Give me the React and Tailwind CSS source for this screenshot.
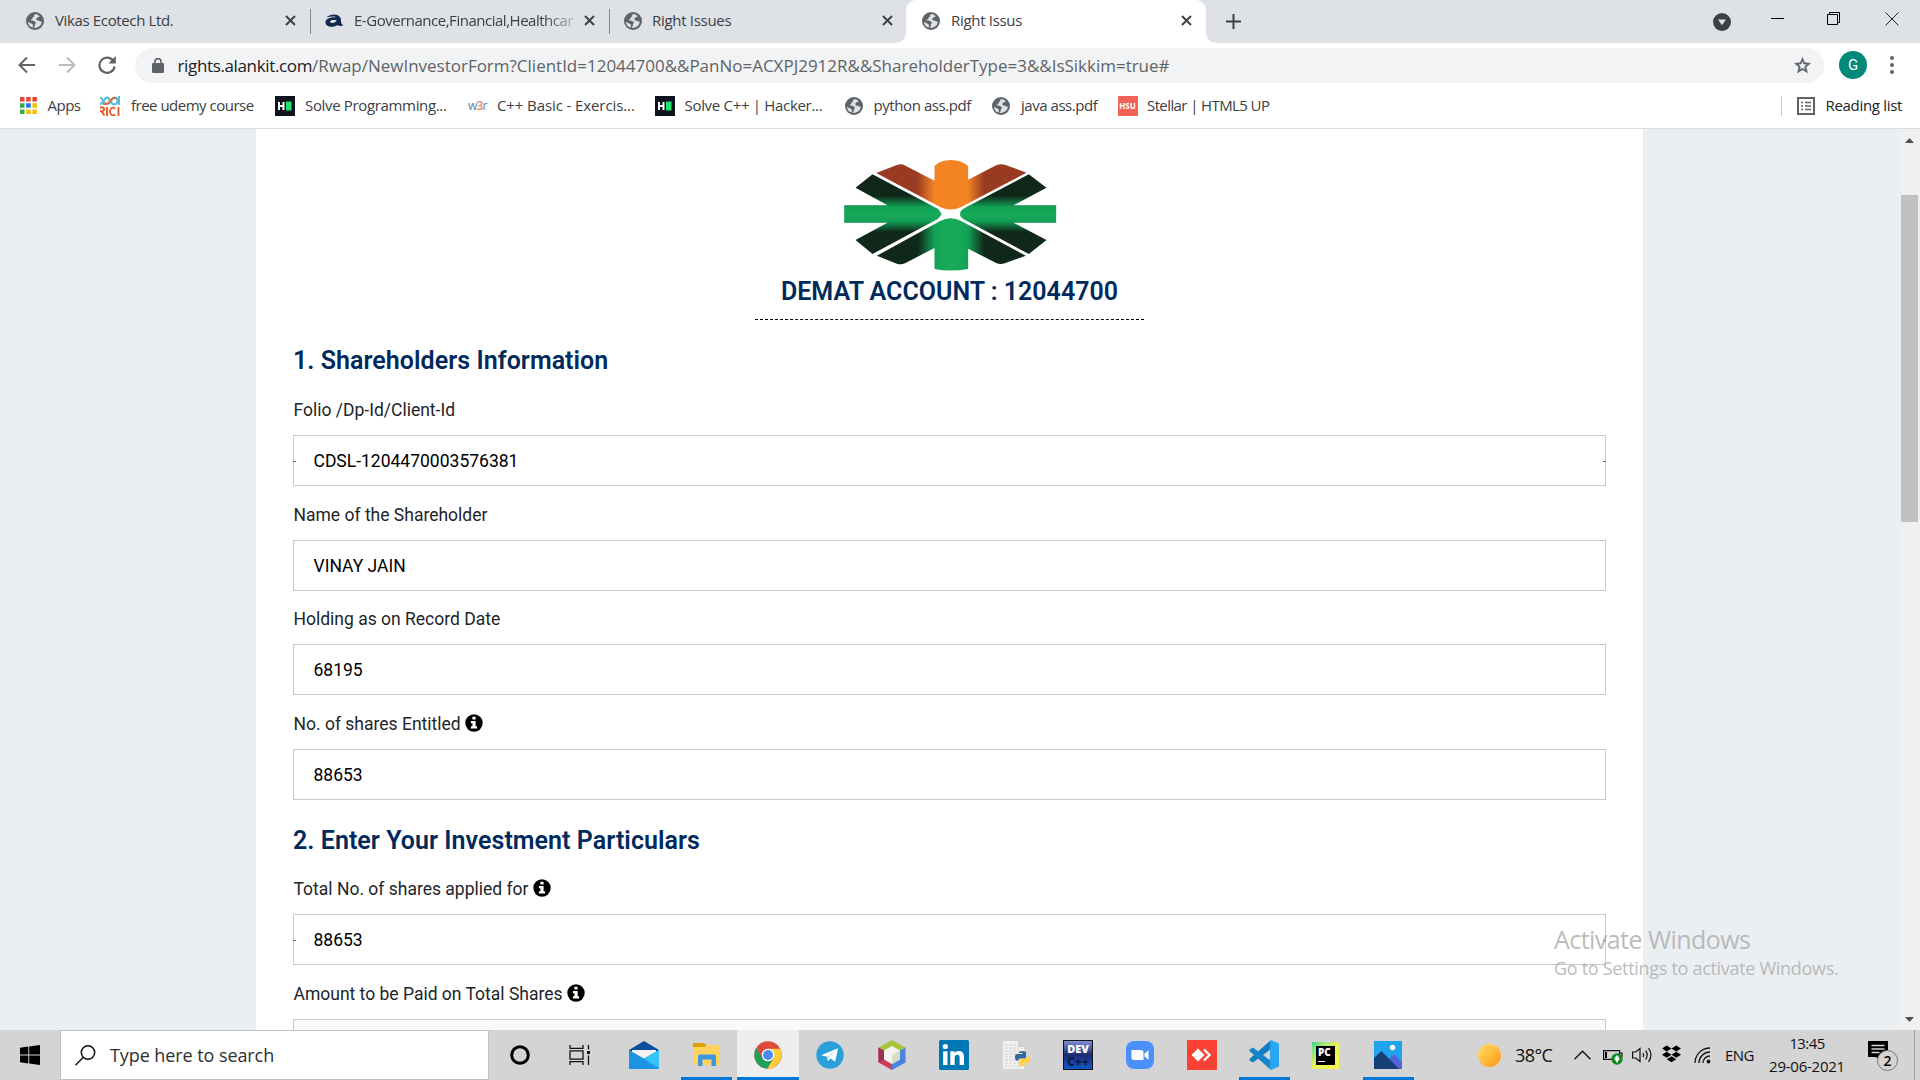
import React from "react";

function Globe() {
  return (
    <svg className="h-[18px] w-[18px] shrink-0" viewBox="0 0 18 18">
      <circle cx="9" cy="9" r="9" fill="#5f6368" />
      <path
        d="M9.6 2.1c-.9.5-1.8 1.100-1.700 2.100.1.900-.8.800-1.300 1.400-.5.600.1 1.300-.6 1.700-.7.400-1.400.2-1.300 1 .1.700 1.500.5 2.900.6 1.700.2 2.200.900 2.200 1.900 0 .900-.9 1.200-1 2.200 0 .800-.5 1.300-.6 2.900a7 7 0 0 1-6.300-6.200L5.200 11.500C5.800 12 6.800 11.800 6.800 12.700v2.900A7 7 0 0 0 15.900 9.800c-.8-.2-1.700.1-2.300-.7-.5-.7-1.900-.1-2.700-.8-.8-.8-.5-2.200.3-2.700.7-.5 1.900-.2 2.500-1.300A7 7 0 0 0 9.600 2.100Z"
        fill="#dee1e6"
      />
    </svg>
  );
}

function Close() {
  return (
    <svg className="h-[11px] w-[11px] shrink-0" viewBox="0 0 11 11" stroke="#3c4043" strokeWidth="1.9">
      <path d="M1 1l9 9M10 1l-9 9" />
    </svg>
  );
}

function AlankitIcon() {
  return (
    <svg className="h-[18px] w-[19px] shrink-0" viewBox="0 0 19 18">
      <path d="M1.500 5.500C5 1.800 12 1.500 15 5c1.400 1.800.8 4.800 1.300 6.300.4 1 1.200 1.500 2.500 1.600-2.300 1.500-5 1.300-6.100 0C9 15.800.8 15.500.5 10.500.5 6 7.500 4.800 11.800 5.600 9.800 4 5 4.500 1.500 5.500Z" fill="#12284c" />
      <path d="M11.700 8.600C9 7.700 5.200 8 5 9.800c.2 2 5.800 1.700 6.700-1.200Z" fill="#dee1e6" />
    </svg>
  );
}

function TabStrip() {
  return (
    <div className="flex h-[43px] bg-[#dee1e6] text-[15px] text-[#3c4043]">
      <div className="flex w-[310px] items-center border-r border-transparent pl-[26px] pb-[2px]">
        <Globe />
        <span className="ml-[11px] w-[229.500px] whitespace-nowrap tracking-[-0.36px]">Vikas Ecotech Ltd.</span>
        <Close />
      </div>
      <div className="mt-[9px] h-[25px] w-px bg-[#85888d]" />
      <div className="flex w-[298px] items-center pl-[14px] pb-[2px]">
        <AlankitIcon />
        <span className="ml-[10px] w-[220px] whitespace-nowrap tracking-[-0.48px] [mask-image:linear-gradient(to_right,black_86%,rgba(0,0,0,0.25))]">E-Governance,Financial,Healthcar</span>
        <span className="ml-[9.500px]"><Close /></span>
      </div>
      <div className="mt-[9px] h-[25px] w-px bg-[#85888d]" />
      <div className="flex w-[296px] items-center pl-[14px] pb-[2px]">
        <Globe />
        <span className="ml-[10px] w-[230px] whitespace-nowrap tracking-[-0.3px]">Right Issues</span>
        <Close />
      </div>
      <div className="relative flex w-[300px] items-center rounded-t-[10px] bg-white pl-[16px] pb-[2px]">
        <svg className="absolute bottom-0 -left-[10px] h-[10px] w-[10px]" viewBox="0 0 10 10"><path d="M10 0v10H0A10 10 0 0 0 10 0Z" fill="#fff" /></svg>
        <svg className="absolute bottom-0 -right-[10px] h-[10px] w-[10px]" viewBox="0 0 10 10"><path d="M0 0v10h10A10 10 0 0 1 0 0Z" fill="#fff" /></svg>
        <Globe />
        <span className="ml-[11px] w-[230px] whitespace-nowrap tracking-[-0.31px]">Right Issus</span>
        <Close />
      </div>
      <svg className="mt-[14px] ml-[20px] h-[15px] w-[15px]" viewBox="0 0 15 15" stroke="#3c4043" strokeWidth="2"><path d="M7.500 0v15M0 7.500h15" /></svg>
      <div className="flex-1" />
      <svg className="mt-[13px] h-[18px] w-[18px]" viewBox="0 0 18 18"><circle cx="9" cy="9" r="9" fill="#3c4043" /><path d="M5 6.500h8L9 12.200Z" fill="#dee1e6" /></svg>
      <svg className="mt-[12px] ml-[40px] h-[14px] w-[14px]" viewBox="0 0 14 14"><path d="M0 6.500h13" stroke="#000" /></svg>
      <svg className="mt-[12px] ml-[42px] h-[14px] w-[14px]" viewBox="0 0 14 14" fill="none" stroke="#000"><path d="M.5 2.500h10v10H.5zM2.500 2.500v-2h10v10h-2" /></svg>
      <svg className="mt-[12px] mr-[21px] ml-[44px] h-[14px] w-[14px]" viewBox="0 0 14 14" stroke="#222"><path d="M.5.5l13 13M13.500.5l-13 13" /></svg>
    </div>
  );
}

function Toolbar() {
  return (
    <div className="flex h-[44px] items-center bg-white">
      <svg className="ml-[18px] h-[18px] w-[18px]" viewBox="0 0 18 18" fill="none" stroke="#5f6368" strokeWidth="2"><path d="M17 9H2M9 1.500L1.500 9 9 16.500" /></svg>
      <svg className="ml-[22px] h-[18px] w-[18px]" viewBox="0 0 18 18" fill="none" stroke="#babcbe" strokeWidth="2"><path d="M1 9h15M9 1.500L16.500 9 9 16.500" /></svg>
      <svg className="ml-[22px] h-[18px] w-[18px]" viewBox="0 0 18 18" fill="none" stroke="#5f6368" strokeWidth="2.200"><path d="M15.600 5.300A7.600 7.600 0 1 0 16.600 10.500" /><path d="M17.800 0v7.500h-7.500Z" fill="#5f6368" stroke="none" /></svg>
      <div className="ml-[19px] flex h-[35px] w-[1689px] items-center rounded-full bg-[#f1f3f4] pl-[16.500px]">
        <svg className="h-[15px] w-[12px]" viewBox="0 0 12 15"><rect x="0" y="5" width="12" height="10" rx="1.200" fill="#5f6368" /><path d="M2.900 6V3.700a3.100 3.100 0 0 1 6.200 0V6" fill="none" stroke="#5f6368" strokeWidth="1.600" /></svg>
        <div className="mt-[2px] ml-[14px] flex text-[17px] whitespace-pre text-[#5f6368]">
          <span className="tracking-[-0.36px] text-[#202124]">rights.alankit.com</span>
          <span className="tracking-[-0.01px]">/Rwap/NewInvestorForm?ClientId=12044700&amp;&amp;PanNo=ACXPJ2912R&amp;&amp;ShareholderType=3&amp;&amp;IsSikkim=true#</span>
        </div>
        <svg className="mr-[12px] ml-auto h-[19px] w-[19px]" viewBox="0 0 24 24" fill="#5f6368"><path d="M22 9.240l-7.190-.62L12 2 9.190 8.630 2 9.240l5.460 4.730L5.820 21 12 17.270 18.180 21l-1.630-7.030L22 9.240zM12 15.400l-3.760 2.270 1-4.280-3.320-2.880 4.380-.38L12 6.100l1.710 4.040 4.380.38-3.320 2.880 1 4.280L12 15.400z" stroke="#5f6368" strokeWidth=".8" /></svg>
      </div>
      <div className="ml-[15px] flex h-[28px] w-[28px] items-center justify-center rounded-full bg-[#00897b] font-[Roboto] text-[15px] text-white">G</div>
      <div className="ml-[23px] flex flex-col gap-[3px]">
        <i className="h-[4px] w-[4px] rounded-full bg-[#5f6368]" />
        <i className="h-[4px] w-[4px] rounded-full bg-[#5f6368]" />
        <i className="h-[4px] w-[4px] rounded-full bg-[#5f6368]" />
      </div>
    </div>
  );
}

function HackerRank() {
  return (
    <svg className="h-[20px] w-[20px] shrink-0" viewBox="0 0 20 20"><path fill="#0e141e" d="M0 0h20v20H0z" /><path d="M4 6v8M8.500 6v8M4 10h4.500" stroke="#fff" strokeWidth="2" /><path fill="#1ee26b" d="M11 5.500h5.500v9H11z" /></svg>
  );
}

function BookmarksBar() {
  return (
    <div className="flex h-[42px] items-center border-b border-[#dadce0] bg-white pb-[4px] pl-[19.500px] text-[15px] whitespace-nowrap text-[#3c4043]">
      <div className="flex w-[80.5px] items-center">
        <svg className="mr-[11px] h-[17px] w-[17px]" viewBox="0 0 17 17">
          <path fill="#ea4335" d="M0 0h4.500v4.500H0zM6.200 0h4.500v4.500H6.200zM12.400 0h4.500v4.500h-4.500z" />
          <path fill="#34a853" d="M0 6.200h4.500v4.500H0zM0 12.400h4.500v4.500H0z" />
          <path fill="#1a73e8" d="M6.200 6.200h4.500v4.500H6.200z" />
          <path fill="#fbbc04" d="M12.400 6.200h4.500v4.500h-4.500zM6.200 12.400h4.500v4.500H6.200zM12.400 12.400h4.500v4.500h-4.500z" />
        </svg>
        <span className="tracking-[-0.5px]">Apps</span>
      </div>
      <div className="flex w-[174.5px] items-center">
        <svg className="mr-[11px] h-[20px] w-[20px] shrink-0" viewBox="0 0 20 20" fill="none" strokeWidth="1.900">
          <path d="M0 1.500C3 1.500 3 8 7 8 12 8 11 1.500 14.500 1.500 19 1.500 18 8.500 14 8.500 10.500 8.500 10.500 1.500 7 1.500 4 1.500 3.500 8 0 8" stroke="#54b8dc" />
          <path d="M3 7.500C5 9 8 8 10 5s4.500-4 6-2" stroke="#e86b3a" />
          <path d="M19 0v9" stroke="#54b8dc" />
          <path d="M0 11.500h2.200c2.500 0 2.500 3.600 0 3.600H0m1.500 0L4.500 19.500M7 11v9M15 12.500c-2-1.800-5-.5-5 3s3 4.800 5 3M18.500 11v9" stroke="#e8592b" />
        </svg>
        <span className="tracking-[-0.5px]">free udemy course</span>
      </div>
      <div className="flex w-[193.500px] items-center"><HackerRank /><span className="ml-[10.500px] tracking-[-0.34px]">Solve Programming...</span></div>
      <div className="flex w-[186.500px] items-center">
        <span className="w-[29px] text-[12px] tracking-[-0.8px] text-[#5b7fb8]">w<b className="font-semibold text-[#e98350]">3</b>r</span>
        <span className="tracking-[-0.1px]">C++ Basic - Exercis...</span>
      </div>
      <div className="flex w-[190px] items-center"><HackerRank /><span className="ml-[10px] tracking-[-0.31px]">Solve C++ | Hacker...</span></div>
      <div className="flex w-[147px] items-center"><Globe /><span className="ml-[11px] tracking-[-0.42px]">python ass.pdf</span></div>
      <div className="flex w-[126px] items-center"><Globe /><span className="ml-[11.500px] tracking-[-0.46px]">java ass.pdf</span></div>
      <div className="flex items-center">
        <span className="flex h-[20px] w-[20px] items-center justify-center bg-[#ef6358] text-[8px] font-bold text-white">HSU</span>
        <span className="ml-[9.500px] tracking-[-0.6px]">Stellar | HTML5 UP</span>
      </div>
      <div className="ml-auto h-[20px] w-px bg-[#c6c8cb]" />
      <svg className="ml-[15px] h-[18px] w-[18px]" viewBox="0 0 18 18" fill="none" stroke="#5f6368" strokeWidth="2"><path d="M1 1h16v16H1z" /><path d="M4 5.500h2M8 5.500h6M4 9h2M8 9h6M4 12.500h2M8 12.500h6" strokeWidth="1.600" /></svg>
      <span className="mr-[18px] ml-[11px] tracking-[-0.32px] text-[#202124]">Reading list</span>
    </div>
  );
}

function Logo() {
  return (
    <svg className="ml-[1px] h-[111px] w-[213px]" viewBox="312 60 638 333">
      <defs>
        <linearGradient id="arm" gradientUnits="userSpaceOnUse" x1="0" x2="0" y1="104" y2="340">
          <stop offset=".27" stopColor="#10281a" />
          <stop offset=".41" stopColor="#12a055" />
          <stop offset=".5" stopColor="#18aa5b" />
          <stop offset=".59" stopColor="#12a055" />
          <stop offset=".73" stopColor="#10281a" />
        </linearGradient>
        <linearGradient id="top" gradientUnits="userSpaceOnUse" x1="408" x2="858" y1="0" y2="0">
          <stop offset=".27" stopColor="#983b22" />
          <stop offset=".39" stopColor="#f38424" />
          <stop offset=".61" stopColor="#f38424" />
          <stop offset=".72" stopColor="#983b22" />
        </linearGradient>
        <linearGradient id="stem" gradientUnits="userSpaceOnUse" x1="408" x2="858" y1="0" y2="0">
          <stop offset=".28" stopColor="#10281a" />
          <stop offset=".39" stopColor="#14a356" />
          <stop offset=".5" stopColor="#18aa5b" />
          <stop offset=".61" stopColor="#14a356" />
          <stop offset=".72" stopColor="#10281a" />
        </linearGradient>
      </defs>
      <path fill="url(#top)" d="M408 99L470 75Q483 70 496 77L583 122V78Q600 60 632 60T684 78V119L768 76Q780 70 794 74L859 98 663 201Q632 216 600 201Z" />
      <path fill="url(#arm)" d="M312 196H442L346 143 397 103 594 207 605 222 594 236 397 342 346 300 442 248H312Z" />
      <path fill="url(#arm)" d="M948 196H820L919 143 866 103 668 207 660 216V228L668 236 866 342 919 300 820 248H948Z" />
      <path fill="url(#stem)" d="M410 347L600 243Q632 227 663 243L857 347 794 370Q780 375 768 369L684 326V387Q632 396 583 387V324L496 369Q483 375 470 371Z" />
    </svg>
  );
}

function InfoIcon() {
  return (
    <svg className="mb-[2px] h-[18px] w-[18px]" viewBox="0 0 18 18">
      <circle cx="9" cy="9" r="8.700" />
      <path d="M7.400 2.800h3.200v2.600H7.400zM5.900 7h4.700v5.300h1.500v2.200H5.900v-2.200h1.500V9.200H5.900z" fill="#fff" />
    </svg>
  );
}

function Label({ children, info }) {
  return (
    <div className="flex items-center gap-[4px] pl-[0.5px] text-[17.500px] leading-[20px] text-[#212529]">
      <span>{children}</span>
      {info && <InfoIcon />}
    </div>
  );
}

function Box({ children, ticks }) {
  return (
    <div className="relative flex h-[51px] items-center border border-[#c9c9c9] pt-[2px] pl-[19.500px] text-[17.500px] text-black">
      {children}
      {ticks && <i className="absolute top-[25px] -left-px h-px w-[3px] bg-[#5f6f86]" />}
      {ticks && <i className="absolute top-[25px] -right-px h-px w-[3px] bg-[#5f6f86]" />}
    </div>
  );
}

function Page() {
  return (
    <div className="relative flex h-[901px] overflow-hidden bg-[#ebeff2] font-[Roboto]">
      <div className="ml-[256px] h-[901px] w-[1387px] overflow-hidden bg-white px-[37px] pt-[31px]">
        <div className="flex flex-col items-center">
          <Logo />
          <h1 className="flex h-[40px] items-center pt-[2px] text-[25px] font-semibold whitespace-nowrap text-[#002a5c]">DEMAT ACCOUNT : 12044700</h1>
          <div className="mt-[8px] w-[389px] border-t border-dashed border-black" />
        </div>
        <h2 className="flex h-[80px] items-center pt-[2px] text-[25px] font-semibold tracking-[0.05px] text-[#002a5c]">1. Shareholders Information</h2>
        <div className="h-[35px]"><Label>Folio /Dp-Id/Client-Id</Label></div>
        <Box ticks>CDSL-1204470003576381</Box>
        <div className="h-[54px] pt-[19px]"><Label>Name of the Shareholder</Label></div>
        <Box>VINAY JAIN</Box>
        <div className="h-[53px] pt-[18px]"><Label>Holding as on Record Date</Label></div>
        <Box>68195</Box>
        <div className="h-[54px] pt-[19px]"><Label info>No. of shares Entitled</Label></div>
        <Box>88653</Box>
        <h2 className="flex h-[79px] items-center pt-[3px] text-[25px] font-semibold tracking-[0.05px] text-[#002a5c]">2. Enter Your Investment Particulars</h2>
        <div className="h-[35px]"><Label info>Total No. of shares applied for</Label></div>
        <Box ticks>88653</Box>
        <div className="h-[54px] pt-[19px]"><Label info>Amount to be Paid on Total Shares</Label></div>
        <div className="h-[51px] border border-[#c9c9c9] bg-[#fafafa]" />
      </div>
      <div className="ml-auto flex w-[21px] flex-col items-center bg-[#f0f0f0]">
        <svg className="mt-[9px] h-[5px] w-[9px]" viewBox="0 0 9 5"><path d="M4.500 0L9 5H0Z" fill="#505050" /></svg>
        <div className="mt-[52px] h-[327px] w-[17px] bg-[#c1c1c1]" />
        <svg className="mt-auto mb-[8px] h-[5px] w-[9px]" viewBox="0 0 9 5"><path d="M4.500 5L9 0H0Z" fill="#505050" /></svg>
      </div>
      <div className="absolute top-[793px] left-[1554px] font-['Open_Sans'] whitespace-nowrap text-[#aaaaaa]/80">
        <div className="text-[25px] leading-[34px] tracking-[-0.55px]">Activate Windows</div>
        <div className="text-[18px] leading-[25px] tracking-[-0.3px]">Go to Settings to activate Windows.</div>
      </div>
    </div>
  );
}

const apps = [
  { name: "mail", icon: (
    <svg className="h-[30px] w-[30px]" viewBox="0 0 30 30"><path d="M0 10L15 1l15 9v5H0z" fill="#0b4f9e" /><path d="M3 10h24v8L15 23 3 18z" fill="#f3f3f3" /><path d="M0 10l15 8.500L30 10v19H0z" fill="#1d9be6" /><path d="M30 10v18L15 18.500z" fill="#35c5f4" /><path d="M0 29L0 10l27 19z" fill="#1c94e0" /></svg>) },
  { name: "explorer", open: true, icon: (
    <svg className="h-[26px] w-[28px]" viewBox="0 0 28 26"><path d="M1 2q0-1 1-1h10l2 2v4H1z" fill="#e0a000" /><path d="M1 5h12l2-2h12q1 0 1 1v18q0 1-1 1H2q-1 0-1-1z" fill="#ffd35c" /><path d="M6 24V14q0-1.500 1.500-1.500h15Q24 12.500 24 14v10h-4.500v-6.500h-9V24z" fill="#3b97df" /></svg>) },
  { name: "chrome", open: true, active: true, icon: (
    <svg className="h-[28px] w-[28px]" viewBox="0 0 28 28"><circle cx="14" cy="14" r="13.700" fill="#dd4b3e" /><path d="M2.200 7.100A13.700 13.700 0 0 0 13.500 27.700L19.500 17.300 8.500 17.300z" fill="#1ea05d" /><path d="M26 7.700H14l5.600 9.600-6.300 10.400A13.700 13.700 0 0 0 26 7.700z" fill="#ffcd40" /><circle cx="14" cy="14" r="6.300" fill="#fff" /><circle cx="14" cy="14" r="5" fill="#4c8bf5" /></svg>) },
  { name: "telegram", icon: (
    <svg className="h-[28px] w-[28px]" viewBox="0 0 28 28"><circle cx="14" cy="14" r="13.700" fill="#2a9fd9" /><path d="M5 14.200L22 7.200 19.200 20.700 14.500 17.400 12 20 11 15.700z" fill="#fff" /><path d="M11 15.700L19.500 9.500 12.500 16.500 12 20z" fill="#c8daea" /></svg>) },
  { name: "netbeans", icon: (
    <svg className="h-[30px] w-[28px]" viewBox="0 0 28 30"><path d="M14 0l13.500 7.500L14 15 .5 7.500z" fill="#a9c43f" /><path d="M.5 7.500L14 15v15L.5 22.500z" fill="#c93f5c" /><path d="M.5 7.500L7 11v8L.5 22.500z" fill="#9b3350" /><path d="M27.500 7.500L14 15v15l13.500-7.500z" fill="#4a83dc" /><path d="M14 6l8 4.500v9L14 24l-8-4.500v-9z" fill="#f2f5ee" /><path d="M14 15l8-4.500v9L14 24z" fill="#d4dccb" /></svg>) },
  { name: "linkedin", icon: (
    <svg className="h-[30px] w-[30px]" viewBox="0 0 30 30"><rect width="30" height="30" rx="1.500" fill="#0077b5" /><circle cx="6.300" cy="6.500" r="2.600" fill="#fff" /><path d="M4.100 11.200h4.400V25H4.100zM11.300 11.200h4.200v1.900c.8-1.400 2.300-2.200 4.200-2.200 4.300 0 5.300 2.700 5.300 6.400V25h-4.400v-6.800c0-1.800-.1-3.400-2.200-3.400s-2.700 1.500-2.700 3.300V25h-4.400z" fill="#fff" /></svg>) },
  { name: "python", icon: (
    <svg className="h-[28px] w-[28px]" viewBox="0 0 28 28"><path d="M1 0h15l6 6v22H1z" fill="#f1f1f1" /><path d="M16 0v6h6z" fill="#ccc" /><path d="M3 4h11M3 7h14M3 10h16M3 13h16M3 16h16M3 19h16M3 22h16M3 25h16" stroke="#cfcfcf" strokeDasharray="3 1" /><path d="M17 11q4-2 7 0v5q0 1.500-2 1.500h-4q-2 0-2 2.500-3 0-3-4 0-3 2-3h5.500v-1H17z" fill="#32699c" /><path d="M24 24q-3.500 2-7 0v-4q0-2 2-2h4q2 0 2-3 3 0 3 4.500 0 2.500-2 2.500h-5v1h3z" fill="#ffd03f" /></svg>) },
  { name: "dev", icon: (
    <span className="flex h-[30px] w-[30px] flex-col items-center border border-[#111] bg-linear-to-b from-[#7f8fd8] via-[#1b2a72] to-[#0a5ac8] pt-[2px]"><b className="h-[12px] text-[11px] leading-[12px] font-extrabold text-white">DEV</b><b className="h-[13px] text-[12px] leading-[13px] font-extrabold text-[#0b1c48]">C++</b></span>) },
  { name: "zoom", icon: (
    <svg className="h-[28px] w-[28px]" viewBox="0 0 28 28"><rect width="28" height="28" rx="8" fill="#4a90fb" /><path d="M5.500 9h9.500q2.500 0 2.500 2.500V19H8q-2.500 0-2.500-2.500zM18.500 12.500L22.500 9.300v9.400l-4-3.200z" fill="#fff" /></svg>) },
  { name: "anydesk", icon: (
    <svg className="h-[30px] w-[30px]" viewBox="0 0 30 30"><path fill="#fb4134" d="M0 0h30v30H0z" /><path d="M11 8.500l6.500 6.500-6.500 6.500L4.500 15z" fill="#fff" /><path d="M17 9.500l5.500 5.500-5.500 5.500" fill="none" stroke="#fff" strokeWidth="2.300" /></svg>) },
  { name: "vscode", open: true, icon: (
    <svg className="h-[30px] w-[30px]" viewBox="0 0 30 30"><path d="M22 0v9L4 22.500 .5 20.500V19z" fill="#0f7cc4" /><path d="M22 30v-9L4 7.500.5 9.500V11z" fill="#1585cc" /><path d="M22 0l8 3.500v23L22 30l-1-1V1z" fill="#2aa6ee" /></svg>) },
  { name: "pycharm", icon: (
    <span className="-ml-[1px] flex h-[27px] w-[27px] items-center justify-center bg-linear-to-br from-[#21d789] via-[#e6f35b] to-[#fcf84a]"><span className="flex h-[19px] w-[19px] flex-col bg-black pl-[2px] text-[10px] leading-[10px] font-bold text-white"><b className="mt-[1px]">PC</b><i className="mt-[4px] h-px w-[7px] bg-white" /></span></span>) },
  { name: "photos", open: true, icon: (
    <svg className="h-[28px] w-[28px]" viewBox="0 0 28 28"><path d="M0 0h28v28H0z" fill="#21a4ee" /><path d="M14 19l6-6 8 8v7H14z" fill="#4f66d4" /><path d="M0 17l7.500-7L25 28H0z" fill="#163f78" /><circle cx="18.500" cy="6.500" r="2.700" fill="#fff" /></svg>) },
];

function Taskbar() {
  return (
    <div className="flex h-[50px] bg-[#d4d4d4]">
      <div className="flex w-[60px] items-center justify-center">
        <svg className="h-[20px] w-[20px]" viewBox="0 0 20 20"><path d="M0 2.800L8.300 1.600v8H0zM9.200 1.500L20 0v9.600H9.200zM0 10.500h8.300v8L0 17.300zM9.200 10.500H20V20L9.200 18.600z" /></svg>
      </div>
      <div className="flex w-[429px] items-center border border-[#c3c3c3] bg-white pl-[14px]">
        <svg className="h-[21px] w-[21px]" viewBox="0 0 21 21" fill="none" stroke="#111" strokeWidth="1.500"><circle cx="13" cy="7.500" r="6.700" /><path d="M8.300 12.300L.5 20.300" /></svg>
        <span className="ml-[14px] text-[18px] tracking-[-0.08px] text-[#2f2f2f]">Type here to search</span>
      </div>
      <div className="flex w-[61px] items-center justify-center">
        <svg className="h-[20px] w-[20px]" viewBox="0 0 20 20"><circle cx="10" cy="10" r="8.300" fill="none" stroke="#000" strokeWidth="3" /></svg>
      </div>
      <div className="flex w-[63px] items-center pl-[19px]">
        <svg className="h-[20px] w-[22px]" viewBox="0 0 22 20" fill="none" stroke="#111" strokeWidth="1.300"><path d="M1 0v3.300h13V0M1 5.800h13v8.400H1zM1 20v-3.300h13V20M19.500 0v4.500M19.500 10.500V20" /><path d="M18 6h3v3h-3z" fill="#111" stroke="none" /></svg>
      </div>
      {apps.map((a) => (
        <div key={a.name} className={a.active ? "flex w-[62px] flex-col items-center bg-[#ededed]" : "flex w-[62px] flex-col items-center"}>
          <div className="flex h-[47px] items-center pt-[3px]">{a.icon}</div>
          {a.open && <div className={a.active ? "h-[3px] w-full bg-[#0078d7]" : "h-[3px] w-[51px] bg-[#0078d7]"} />}
        </div>
      ))}
      <div className="ml-[59px] flex items-center">
        <div className="h-[23px] w-[23px] rounded-full bg-linear-to-br from-[#ffe163] to-[#ff9500]" />
        <span className="ml-[14px] w-[59px] text-[18px] tracking-[-0.6px] text-[#111]">38°C</span>
        <svg className="h-[10px] w-[17px]" viewBox="0 0 17 10" fill="none" stroke="#111" strokeWidth="1.400"><path d="M.5 9.200l8-8 8 8" /></svg>
        <svg className="mt-[4px] ml-[12px] h-[16px] w-[20px]" viewBox="0 0 20 16"><path d="M.6 1.600h16v8.800H.6zM17 4h2v4h-2" fill="none" stroke="#111" strokeWidth="1.200" /><path d="M2 3h2v6H2z" /><circle cx="14" cy="10" r="5.700" fill="#0a8a1f" /><path d="M14 6.500q4 3.500 0 6.200-4-2.700 0-6.200M14 9v5" fill="#fff" stroke="#fff" strokeWidth=".8" /></svg>
        <svg className="ml-[9px] h-[16px] w-[21px]" viewBox="0 0 21 16" fill="none" stroke="#111" strokeWidth="1.200"><path d="M.6 5h3L8 1.500v13L3.600 11h-3zM11 6q1.200 2 0 4M13.700 3.700q3 4.300 0 8.600M16.500 1.200q5 6.800 0 13.600" /></svg>
        <svg className="mb-[2px] ml-[9px] h-[18px] w-[19px]" viewBox="0 0 19 18"><path d="M4.700.5L9.500 3.500 4.700 6.500 0 3.500zM14.300.5L19 3.500l-4.700 3-4.800-3zM4.700 6.800l4.800 3-4.800 3L0 9.800zM14.300 6.800l4.700 3-4.700 3-4.800-3zM9.500 11.200l4.700 3-4.700 3-4.700-3z" /></svg>
        <svg className="ml-[13px] h-[17px] w-[17px]" viewBox="0 0 17 17" fill="none" stroke="#111" strokeWidth="1.300"><path d="M1 16A15 15 0 0 1 16 1M5 16A11 11 0 0 1 16 5M9 16A7 7 0 0 1 16 9" /><circle cx="14.500" cy="14.500" r="1.900" fill="#111" stroke="none" /></svg>
        <span className="ml-[14px] w-[44px] text-[15px] tracking-[-0.6px] text-[#111]">ENG</span>
        <div className="flex w-[76px] flex-col items-center text-[15px] leading-[23px] whitespace-nowrap text-[#111]">
          <span className="tracking-[-0.6px]">13:45</span>
          <span className="tracking-[-0.25px]">29-06-2021</span>
        </div>
        <div className="relative mt-[2px] ml-[23px] h-[30px] w-[31px]">
          <svg className="h-[22px] w-[20px]" viewBox="0 0 20 22"><path d="M0 0h20v16h-7v5l-5-5H0z" /><path d="M3.500 4.500h13M3.500 8h13M3.500 11.500h8" stroke="#d4d4d4" strokeWidth="1.300" /></svg>
          <span className="absolute top-[9px] left-[9px] flex h-[21px] w-[21px] items-center justify-center rounded-full border border-[#777] bg-[#d4d4d4] text-[14px] font-semibold">2</span>
        </div>
      </div>
      <div className="mr-[5px] ml-auto w-px bg-[#a0a0a0]" />
    </div>
  );
}

export default function App() {
  return (
    <div className="h-[1080px] w-[1920px] overflow-hidden font-['Open_Sans']">
      <TabStrip />
      <Toolbar />
      <BookmarksBar />
      <Page />
      <Taskbar />
    </div>
  );
}
